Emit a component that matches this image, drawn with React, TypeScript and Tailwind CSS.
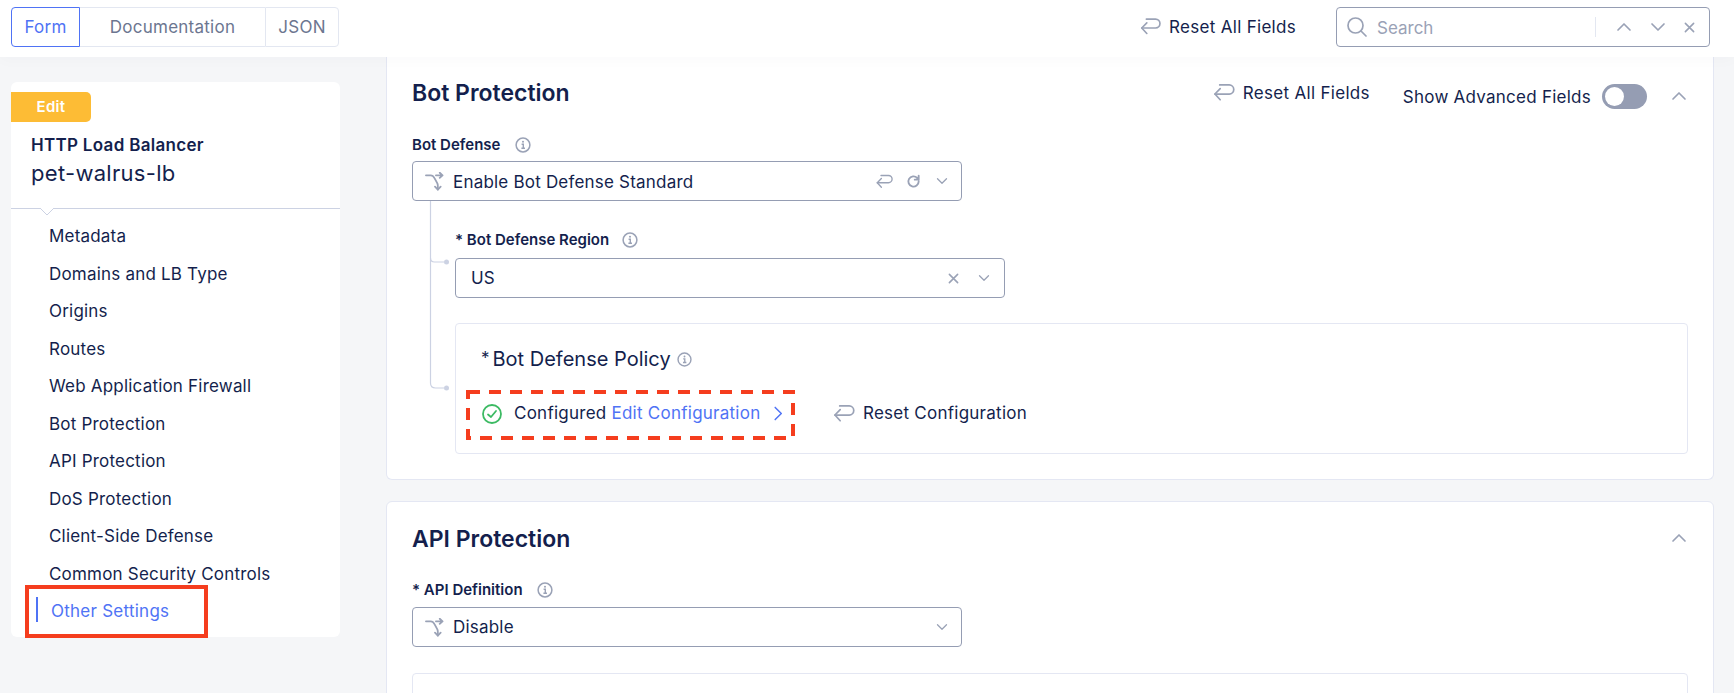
import React from "react";

const Reset = ({ className = "" }: { className?: string }) => (
  <svg viewBox="0 0 24 20" fill="none" stroke="currentColor" strokeWidth="1.800" strokeLinecap="round" strokeLinejoin="round" className={className}>
    <path d="M8 2h10a4.800 4.800 0 0 1 0 9.600H3" />
    <path d="M8.500 6 3 11.600l5.500 6" />
  </svg>
);
const Split = ({ className = "" }: { className?: string }) => (
  <svg viewBox="0 0 20 20" fill="none" stroke="currentColor" strokeWidth="1.900" strokeLinecap="round" strokeLinejoin="round" className={className}>
    <path d="M1 3.500h5c2 0 3 1 4 3l3 5.500c.4 1 .5 1.500.5 2.500v4" />
    <path d="M11.500 3.500h7M15.500.800l3 2.700-3 2.700" />
    <path d="M10.500 15.500l3 3 3-3" />
  </svg>
);
const Info = ({ className = "" }: { className?: string }) => (
  <svg viewBox="0 0 16 16" fill="none" stroke="currentColor" className={className}>
    <circle cx="8" cy="8" r="6.900" strokeWidth="1.500" />
    <path d="M6.600 7.300H8.300V11.200M6.400 11.200H10" strokeWidth="1.400" />
    <circle cx="8" cy="4.800" r="1" fill="currentColor" stroke="none" />
  </svg>
);
const Chev = ({ className = "", up = false }: { className?: string; up?: boolean }) => (
  <svg viewBox="0 0 16 10" fill="none" stroke="currentColor" strokeWidth="1.700" strokeLinecap="round" strokeLinejoin="round" className={className}>
    <path d={up ? "M2 8l6-6 6 6" : "M2 2l6 6 6-6"} />
  </svg>
);
const X = ({ className = "" }: { className?: string }) => (
  <svg viewBox="0 0 12 12" fill="none" stroke="currentColor" strokeWidth="1.700" strokeLinecap="round" className={className}>
    <path d="M1.500 1.500l9 9M10.500 1.500l-9 9" />
  </svg>
);

const menu = ["Metadata", "Domains and LB Type", "Origins", "Routes", "Web Application Firewall", "Bot Protection", "API Protection", "DoS Protection", "Client-Side Defense", "Common Security Controls"];

const Label = ({ children, info }: { children: React.ReactNode; info: string }) => (
  <div className="flex items-center h-5 text-[15px] font-semibold text-[#141f4d]">
    <span>{children}</span>
    <Info className={`w-4 h-4 text-[#9aa2b6] ${info}`} />
  </div>
);

export default function App() {
  return (
    <div className="w-[1734px] h-[693px] overflow-hidden bg-[#f5f6f8] text-[#141f4d] flex flex-col" style={{ fontFamily: "Inter, 'Liberation Sans', sans-serif" }}>
      <header className="relative z-10 h-[57px] pt-[7px] shrink-0 bg-white flex items-start shadow-[0_3px_14px_rgba(20,30,70,0.025)]">
        <div className="ml-[11px] flex h-[40px] text-[17px] tracking-[0.25px] text-[#6c7690]">
          <div className="w-[69px] pt-[1px] flex items-center justify-center border border-[#4f73f5] rounded-l-[4px] text-[#4f73f5]">Form</div>
          <div className="w-[185px] pt-[1px] flex items-center justify-center border-y border-[#e3e7f1]">Documentation</div>
          <div className="w-[74px] pt-[1px] flex items-center justify-center border border-[#e3e7f1] rounded-r-[4px]">JSON</div>
        </div>
        <div className="ml-[800px] flex items-center h-[39px] w-[157px] text-[17px] tracking-[0.3px]">
          <Reset className="w-[23px] h-[19px] text-[#9aa2b6]" />
          <span className="ml-[8px] pt-[2px] whitespace-nowrap">Reset All Fields</span>
        </div>
        <div className="ml-[40px] w-[374px] h-[40px] border border-[#959db3] rounded-[4px] flex items-center pl-[10px]">
          <svg viewBox="0 0 20 20" fill="none" stroke="currentColor" strokeWidth="1.700" strokeLinecap="round" className="w-5 h-5 text-[#9aa2b6]">
            <circle cx="8.500" cy="8.500" r="7.500" />
            <path d="M14 14l5 5" />
          </svg>
          <span className="ml-[10px] pt-[4px] text-[17px] text-[#9aa2b6] w-[218px]">Search</span>
          <div className="w-px h-[20px] bg-[#e3e7f1]" />
          <Chev up className="ml-[20px] w-4 h-[10px] text-[#9aa2b6]" />
          <Chev className="ml-[18px] w-4 h-[10px] text-[#9aa2b6]" />
          <X className="ml-[18px] w-[11px] h-[11px] text-[#9aa2b6]" />
        </div>
      </header>

      <main className="flex flex-1 min-h-0">
        <aside className="ml-[11px] mt-[25px] w-[329px] h-[555px] shrink-0 bg-white rounded-[6px] relative">
          <div className="mt-[10px] w-[80px] h-[30px] bg-[#fdbc35] rounded-r-[5px] text-white text-[15px] tracking-[0.3px] font-semibold flex items-center justify-center">Edit</div>
          <div className="ml-[20px] mt-[11px] text-[17px] leading-6 font-semibold tracking-[0.3px]">HTTP Load Balancer</div>
          <div className="ml-[20px] mt-[2px] text-[22px] leading-7 tracking-[0.3px]">pet-walrus-lb</div>
          <div className="mt-[21px] h-px bg-[#ccd2e3] relative">
            <svg viewBox="0 0 14 8" className="absolute left-[29px] top-0 w-[14px] h-[8px]" fill="#fff" stroke="#ccd2e3">
              <path d="M0 0l7 7 7-7" />
            </svg>
          </div>
          <div className="mt-[9px] relative">
            {menu.map((m) => (
              <div key={m} className="h-[37.500px] flex items-center pl-[38px] text-[17px] tracking-[0.2px]">{m}</div>
            ))}
            <div className="h-[37.500px] flex items-center pl-[25px] text-[17px] tracking-[0.25px] text-[#4f73f5]">
              <div className="w-[2px] h-[25px] bg-[#4f73f5] mr-[13px] mb-[4px]" />
              Other Settings
            </div>
            <div className="absolute left-[14px] top-[367px] w-[183px] h-[53px] border-[4px] border-[#f53d1e]" />
          </div>
        </aside>

        <div className="ml-[46px] w-[1328px] shrink-0 min-w-0">
          <section className="bg-white border-x border-b border-[#e4e7f3] rounded-b-[6px] pl-[25px] pr-[25px] pt-[21px] pb-[25px]">
            <div className="flex items-start h-[28px]">
              <h2 className="text-[23px] leading-7 font-semibold mt-px">Bot Protection</h2>
              <div className="ml-auto flex items-center h-[28px] text-[17px] tracking-[0.3px]">
                <Reset className="w-[23px] h-[19px] text-[#9aa2b6]" />
                <span className="ml-[8px] mr-[33px] pt-[3px]">Reset All Fields</span>
              </div>
              <div className="flex items-center h-[28px] mt-[4px] text-[17px] tracking-[0.25px]">
                <span className="pt-[3px]">Show Advanced Fields</span>
                <div className="ml-[11px] w-[45px] h-[25px] rounded-full bg-[#959db3] flex items-center pl-[3px]">
                  <div className="w-[19px] h-[19px] rounded-full bg-white" />
                </div>
                <Chev up className="ml-[24px] mr-[1px] w-[16px] h-[10px] text-[#9aa2b6]" />
              </div>
            </div>

            <div className="mt-[29px]"><Label info="ml-[15px]">Bot Defense</Label></div>
            <div className="mt-[6px] w-[550px] h-[40px] border border-[#959db3] rounded-[4px] flex items-center pl-[12px] pr-[13px] text-[17px] tracking-[0.2px]">
              <Split className="w-[19px] h-[19px] text-[#9aa2b6]" />
              <span className="ml-[9px] pt-[3px]">Enable Bot Defense Standard</span>
              <Reset className="ml-auto w-[18px] h-[15px] text-[#9aa2b6]" />
              <svg viewBox="0 0 16 16" fill="none" stroke="currentColor" strokeWidth="2" strokeLinecap="round" className="ml-[13px] w-[15px] h-[15px] text-[#9aa2b6]">
                <path d="M13.500 8a5.500 5.500 0 1 1-1.600-3.900L13.500 6M13.500 1.800V6H9.300" />
              </svg>
              <Chev className="ml-[15px] w-[12px] h-[8px] text-[#9aa2b6]" />
            </div>

            <div className="relative pl-[43px]">
              <svg className="absolute left-0 top-0 w-[40px] h-[190px]" fill="none" stroke="#ccd2e3" strokeWidth="1.200">
                <path d="M18.500 0V182q0 5 5 5H32" />
                <path d="M18.500 57q0 4 4 4H32" />
                <circle cx="34.500" cy="61" r="2.500" fill="#ccd2e3" stroke="none" />
                <circle cx="34.500" cy="187" r="2.500" fill="#ccd2e3" stroke="none" />
              </svg>
              <div className="pt-[29px]"><Label info="ml-[13px]">* Bot Defense Region</Label></div>
              <div className="mt-[8px] w-[550px] h-[40px] border border-[#959db3] rounded-[4px] flex items-center pl-[15px] pr-[14px] text-[17px]">
                <span className="pt-[2px]">US</span>
                <X className="ml-auto w-[11px] h-[11px] text-[#9aa2b6]" />
                <Chev className="ml-[19px] w-[12px] h-[8px] text-[#9aa2b6]" />
              </div>
              <div className="mt-[25px] h-[131px] w-[1233px] border border-[#e4e7f3] rounded-[4px] pl-[25px]">
                <div className="mt-[23px] flex items-center h-[24px] text-[20px]">
                  <span className="text-[17px] mr-[3px]">*</span>
                  <span>Bot Defense Policy</span>
                  <Info className="ml-[6px] w-[15px] h-[15px] text-[#9aa2b6]" />
                </div>
                <div className="mt-[30px] flex items-center text-[17px] tracking-[0.25px]">
                  <div className="relative flex items-center h-[24px] w-[312px]">
                    <svg viewBox="0 0 20 20" fill="none" stroke="#3cba63" strokeWidth="1.800" strokeLinecap="round" strokeLinejoin="round" className="ml-px w-[20px] h-[20px]">
                      <circle cx="10" cy="10" r="9" />
                      <path d="M6 10.500l3 2.500 5-6" />
                    </svg>
                    <span className="ml-[12px]">Configured</span>
                    <span className="ml-[5px] text-[#4f73f5]">Edit Configuration</span>
                    <svg viewBox="0 0 10 16" fill="none" stroke="#4f73f5" strokeWidth="1.600" strokeLinecap="round" strokeLinejoin="round" className="ml-[13px] w-[10px] h-[15px]">
                      <path d="M2 1.500 8.500 8 2 14.500" />
                    </svg>
                    <svg className="absolute left-[-15px] top-[-12px] overflow-visible" width="329" height="50" fill="none">
                      <rect x="2" y="2" width="325" height="46" stroke="#f53d1e" strokeWidth="4" strokeDasharray="12 9" />
                    </svg>
                  </div>
                  <Reset className="ml-[39px] w-[23px] h-[19px] text-[#9aa2b6]" />
                  <span className="ml-[8px]">Reset Configuration</span>
                </div>
              </div>
            </div>
          </section>

          <section className="mt-[21px] bg-white border border-[#e4e7f3] rounded-[6px] pl-[25px] pr-[25px] pt-[22px] h-[300px]">
            <div className="flex items-center h-[28px]">
              <h2 className="text-[23px] leading-7 font-semibold mt-px">API Protection</h2>
              <Chev up className="ml-auto mr-[1px] w-[16px] h-[10px] text-[#9aa2b6]" />
            </div>
            <div className="mt-[28px]"><Label info="ml-[14px]">* API Definition</Label></div>
            <div className="mt-[7px] w-[550px] h-[40px] border border-[#959db3] rounded-[4px] flex items-center pl-[12px] pr-[13px] text-[17px] tracking-[0.2px]">
              <Split className="w-[19px] h-[19px] text-[#9aa2b6]" />
              <span className="ml-[9px] pt-[2px]">Disable</span>
              <Chev className="ml-auto w-[12px] h-[8px] text-[#9aa2b6]" />
            </div>
            <div className="mt-[26px] h-[100px] w-[1276px] border border-[#e4e7f3] rounded-[4px]" />
          </section>
        </div>
      </main>
    </div>
  );
}
